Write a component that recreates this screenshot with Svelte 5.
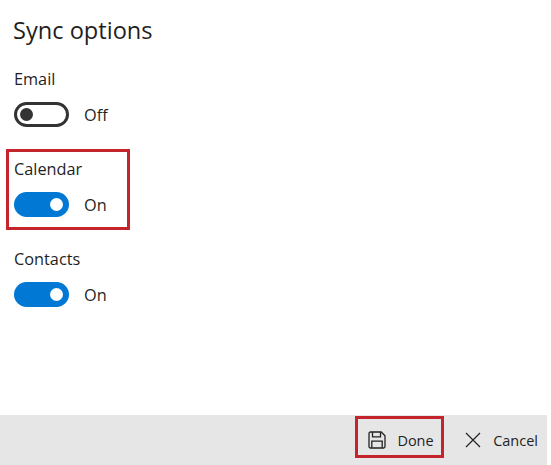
<script lang="ts">
	const options = [
		{ label: 'Email', on: false, marked: false },
		{ label: 'Calendar', on: true, marked: true },
		{ label: 'Contacts', on: true, marked: false }
	];
</script>

<div class="page">
	<main class="content">
		<h1>Sync options</h1>
		{#each options as opt}
			<section class="option" class:marked={opt.marked}>
				<div class="label">{opt.label}</div>
				<div class="row">
					<span class="toggle" class:on={opt.on}><span class="knob"></span></span>
					<span class="state">{opt.on ? 'On' : 'Off'}</span>
				</div>
			</section>
		{/each}
	</main>
	<footer class="bar">
		<button class="action done">
			<svg width="18" height="18" viewBox="0 0 18 18" fill="none" stroke="#222" stroke-width="1.3">
				<path d="M1 2.5A1.5 1.5 0 0 1 2.5 1h10.7L17 4.8v10.7a1.5 1.5 0 0 1-1.5 1.5h-13A1.5 1.5 0 0 1 1 15.5z" />
				<path d="M4.5 1.2v4.6h8V1.2M3.8 16.8v-6.6h10.4v6.6" />
			</svg>
			Done
		</button>
		<button class="action cancel">
			<svg width="18" height="18" viewBox="0 0 18 18" fill="none" stroke="#222" stroke-width="1.2">
				<path d="M2 2l14 14M16 2 2 16" />
			</svg>
			Cancel
		</button>
	</footer>
</div>

<style>
	:global(body) {
		margin: 0;
		background: #fff;
	}

	.page {
		width: 551px;
		height: 465px;
		display: flex;
		flex-direction: column;
		font-family: 'Open Sans', 'Noto Sans', sans-serif;
		color: #1f1f1f;
	}

	.content {
		flex: 1;
		padding: 14px 0 0 14px;
	}

	h1 {
		margin: 0 0 13px -1px;
		font-size: 23.6px;
		font-weight: 400;
		line-height: 32px;
	}

	.option {
		width: 113px;
		height: 75px;
		margin: 0 0 9px -8px;
		padding: 0 0 0 5px;
		border: 3px solid transparent;
	}

	.option.marked {
		border-color: #c4242b;
	}

	.label {
		font-size: 16.3px;
		line-height: 24px;
		padding-top: 5px;
	}

	.row {
		display: flex;
		align-items: center;
		gap: 15px;
		margin-top: 11px;
	}

	.toggle {
		width: 55px;
		height: 25px;
		box-sizing: border-box;
		border: 3px solid #333;
		border-radius: 13px;
		display: flex;
		align-items: center;
		padding: 0 3px;
	}

	.toggle.on {
		background: #0078d4;
		border-color: #0078d4;
		justify-content: flex-end;
	}

	.knob {
		width: 13px;
		height: 13px;
		border-radius: 50%;
		background: #333;
	}

	.on .knob {
		background: #fff;
	}

	.state {
		font-size: 16.3px;
		line-height: 24px;
	}

	.bar {
		height: 50px;
		margin-right: 4px;
		background: #e6e6e6;
		display: flex;
		justify-content: flex-end;
		align-items: stretch;
		padding-right: 9px;
	}

	.action {
		all: unset;
		display: flex;
		align-items: center;
		gap: 11px;
		font-size: 14.5px;
		color: #1f1f1f;
		box-sizing: border-box;
	}

	.done {
		position: relative;
		gap: 11.5px;
		padding: 0 10.5px 0 12.5px;
	}

	.done::after {
		content: '';
		position: absolute;
		inset: 1px 0 7px 0;
		border: 3px solid #c4242b;
	}

	.cancel {
		padding-left: 20px;
	}
</style>
